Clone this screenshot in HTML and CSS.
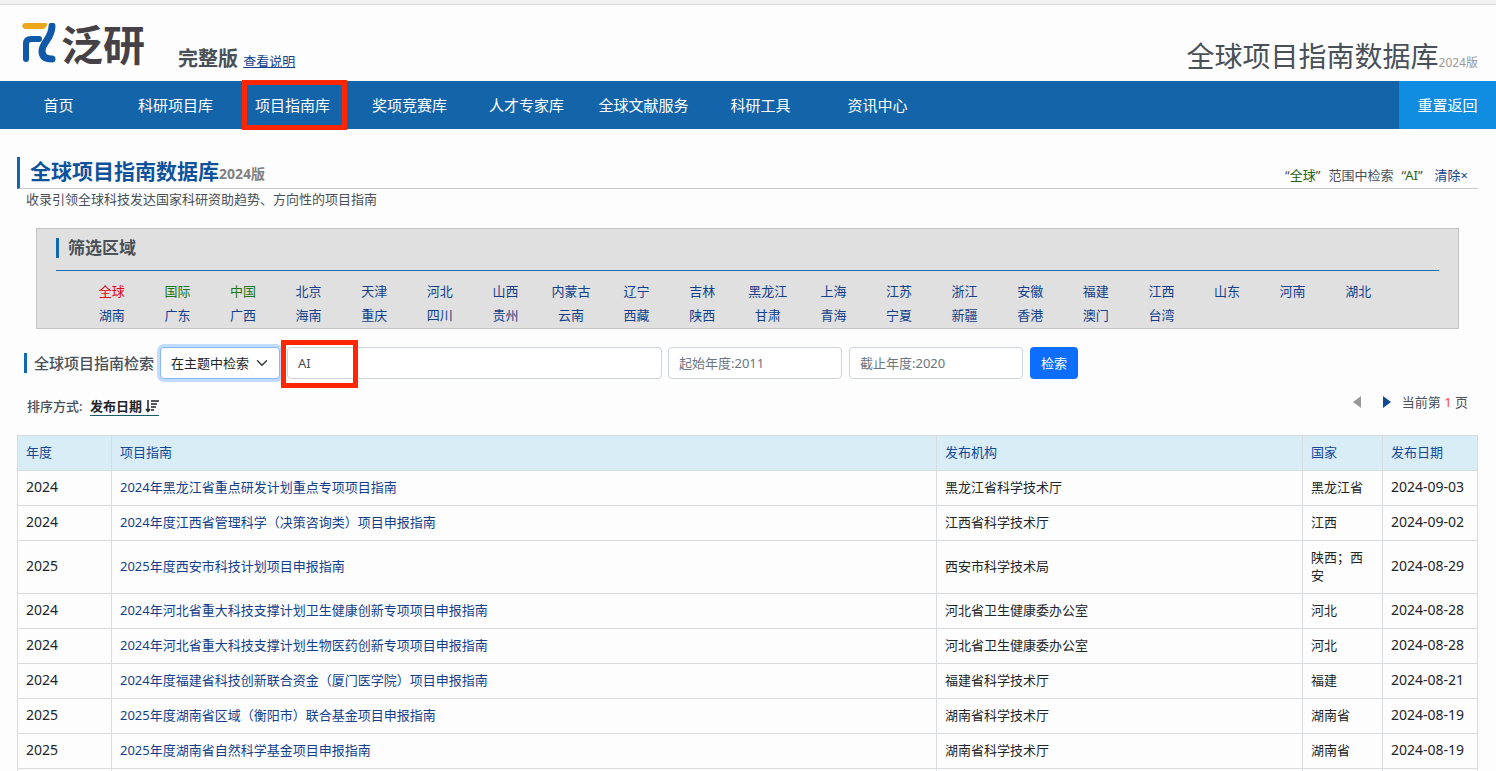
FILE: index.html
```html
<!DOCTYPE html>
<html lang="zh-CN">
<head>
  <meta charset="UTF-8">
  <meta name="viewport" content="width=device-width, initial-scale=1.0">
  <title>全球项目指南数据库</title>
  <link rel="stylesheet" href="styles.css">
</head>
<body>
  <header class="top">
    <a class="logo" href="#">
      <svg class="logo-mark" viewBox="0 0 36 40" width="36" height="40" aria-hidden="true">
        <path d="M4 0h20q3 0 2 2l-1 2q-1 2-3 2H4q-2 0-3-3 1-3 3-3z" fill="#eda51c"/>
        <path d="M5 36V21q0-5 5-5h8" fill="none" stroke="#1059a8" stroke-width="6" stroke-linecap="round"/>
        <path d="M31 3c0 13-10 16-10 25 0 5 3 8 10 8" fill="none" stroke="#1059a8" stroke-width="7" stroke-linecap="round"/>
      </svg>
      <span class="logo-text">泛研</span>
    </a>
    <div class="edition">完整版 <a href="#">查看说明</a></div>
    <div class="site-name">全球项目指南数据库<small>2024版</small></div>
  </header>

  <nav class="nav">
    <a href="#">首页</a>
    <a href="#">科研项目库</a>
    <a href="#" class="marked">项目指南库</a>
    <a href="#">奖项竞赛库</a>
    <a href="#">人才专家库</a>
    <a href="#">全球文献服务</a>
    <a href="#">科研工具</a>
    <a href="#">资讯中心</a>
    <a href="#" class="reset">重置返回</a>
  </nav>

  <main class="main">
    <div class="title-row">
      <h1>全球项目指南数据库<small>2024版</small></h1>
      <div class="scope">
        <span>“<b>全球</b>”</span>
        <span>范围中检索</span>
        <span>“<b>AI</b>”</span>
        <a href="#">清除×</a>
      </div>
    </div>
    <p class="intro">收录引领全球科技发达国家科研资助趋势、方向性的项目指南</p>

    <section class="filter">
      <h2>筛选区域</h2>
      <div class="regions">
        <a href="#" class="current">全球</a>
        <a href="#" class="wide">国际</a>
        <a href="#" class="wide">中国</a>
        <a href="#">北京</a>
        <a href="#">天津</a>
        <a href="#">河北</a>
        <a href="#">山西</a>
        <a href="#">内蒙古</a>
        <a href="#">辽宁</a>
        <a href="#">吉林</a>
        <a href="#">黑龙江</a>
        <a href="#">上海</a>
        <a href="#">江苏</a>
        <a href="#">浙江</a>
        <a href="#">安徽</a>
        <a href="#">福建</a>
        <a href="#">江西</a>
        <a href="#">山东</a>
        <a href="#">河南</a>
        <a href="#">湖北</a>
        <a href="#">湖南</a>
        <a href="#">广东</a>
        <a href="#">广西</a>
        <a href="#">海南</a>
        <a href="#">重庆</a>
        <a href="#">四川</a>
        <a href="#">贵州</a>
        <a href="#">云南</a>
        <a href="#">西藏</a>
        <a href="#">陕西</a>
        <a href="#">甘肃</a>
        <a href="#">青海</a>
        <a href="#">宁夏</a>
        <a href="#">新疆</a>
        <a href="#">香港</a>
        <a href="#">澳门</a>
        <a href="#">台湾</a>
      </div>
    </section>

    <form class="search">
      <label class="search-label" for="field">全球项目指南检索</label>
      <div class="select-box">
        <select id="field">
          <option>在主题中检索</option>
        </select>
        <svg viewBox="0 0 16 16" width="12" height="12" aria-hidden="true">
          <path d="M2 5l6 6 6-6" fill="none" stroke="#343a40" stroke-width="2" stroke-linecap="round" stroke-linejoin="round"/>
        </svg>
      </div>
      <div class="keyword">
        <input type="text" value="AI" aria-label="检索词">
      </div>
      <input class="year" type="text" placeholder="起始年度:2011" aria-label="起始年度">
      <input class="year" type="text" placeholder="截止年度:2020" aria-label="截止年度">
      <button type="submit">检索</button>
    </form>

    <div class="list-bar">
      <div class="sort">排序方式:
        <a href="#">发布日期
          <svg viewBox="0 0 14 14" width="14" height="14" aria-hidden="true">
            <path d="M3 1v11M1 10l2 2.500 2-2.500M6 2h8M6 5h6M6 8h5M6 11h3" fill="none" stroke="#212529" stroke-width="1.500"/>
          </svg>
        </a>
      </div>
      <div class="pager">
        <a href="#" aria-label="上一页"><svg viewBox="0 0 8 12" width="8" height="12"><path d="M8 0v12L0 6z" fill="#999"/></svg></a>
        <a href="#" aria-label="下一页"><svg viewBox="0 0 8 12" width="8" height="12"><path d="M0 0v12l8-6z" fill="#124a92"/></svg></a>
        <span>当前第 <em>1</em> 页</span>
      </div>
    </div>

    <table class="guides">
      <thead>
        <tr>
          <th class="col-year">年度</th>
          <th>项目指南</th>
          <th class="col-org">发布机构</th>
          <th class="col-area">国家</th>
          <th class="col-date">发布日期</th>
        </tr>
      </thead>
      <tbody>
        <tr>
          <td class="num">2024</td>
          <td><a href="#">2024年黑龙江省重点研发计划重点专项项目指南</a></td>
          <td>黑龙江省科学技术厅</td>
          <td>黑龙江省</td>
          <td class="num">2024-09-03</td>
        </tr>
        <tr>
          <td class="num">2024</td>
          <td><a href="#">2024年度江西省管理科学（决策咨询类）项目申报指南</a></td>
          <td>江西省科学技术厅</td>
          <td>江西</td>
          <td class="num">2024-09-02</td>
        </tr>
        <tr>
          <td class="num">2025</td>
          <td><a href="#">2025年度西安市科技计划项目申报指南</a></td>
          <td>西安市科学技术局</td>
          <td>陕西；西安</td>
          <td class="num">2024-08-29</td>
        </tr>
        <tr>
          <td class="num">2024</td>
          <td><a href="#">2024年河北省重大科技支撑计划卫生健康创新专项项目申报指南</a></td>
          <td>河北省卫生健康委办公室</td>
          <td>河北</td>
          <td class="num">2024-08-28</td>
        </tr>
        <tr>
          <td class="num">2024</td>
          <td><a href="#">2024年河北省重大科技支撑计划生物医药创新专项项目申报指南</a></td>
          <td>河北省卫生健康委办公室</td>
          <td>河北</td>
          <td class="num">2024-08-28</td>
        </tr>
        <tr>
          <td class="num">2024</td>
          <td><a href="#">2024年度福建省科技创新联合资金（厦门医学院）项目申报指南</a></td>
          <td>福建省科学技术厅</td>
          <td>福建</td>
          <td class="num">2024-08-21</td>
        </tr>
        <tr>
          <td class="num">2025</td>
          <td><a href="#">2025年度湖南省区域（衡阳市）联合基金项目申报指南</a></td>
          <td>湖南省科学技术厅</td>
          <td>湖南省</td>
          <td class="num">2024-08-19</td>
        </tr>
        <tr>
          <td class="num">2025</td>
          <td><a href="#">2025年度湖南省自然科学基金项目申报指南</a></td>
          <td>湖南省科学技术厅</td>
          <td>湖南省</td>
          <td class="num">2024-08-19</td>
        </tr>
        <tr>
          <td></td>
          <td></td>
          <td></td>
          <td></td>
          <td></td>
        </tr>
      </tbody>
    </table>
  </main>
</body>
</html>
```
FILE: styles.css
```css
*,
*::before,
*::after {
  box-sizing: border-box;
}
body {
  margin: 0;
  height: 100vh;
  overflow: hidden;
  background: #fdfdfd;
  color: #495057;
  font: 13px/18px "Noto Sans", "Noto Sans CJK SC", sans-serif;
}
a {
  color: #123f8c;
  text-decoration: none;
}

/* header */
.top {
  display: flex;
  align-items: flex-end;
  height: 81px;
  padding: 0 18px 6px 21px;
  border-top: 4px solid #f3f3f3;
  box-shadow: inset 0 1px #d8d8d8;
}
.logo {
  display: flex;
  align-items: center;
  gap: 4px;
  height: 40px;
  margin-bottom: 12px;
}
.logo-text {
  color: #454147;
  font: 700 42px/40px "Noto Sans CJK SC", sans-serif;
}
.edition {
  margin-left: 33px;
  font-size: 20px;
  font-weight: bold;
  line-height: 28px;
}
.edition a {
  font-size: 13px;
  font-weight: normal;
  text-decoration: underline;
}
.site-name {
  margin-left: auto;
  font-size: 28px;
  line-height: 24px;
}
.site-name small {
  color: #999;
  font-size: 12px;
}

/* main menu */
.nav {
  display: flex;
  height: 48px;
  background: #1364a8;
  font-size: 15px;
  line-height: 48px;
  text-align: center;
}
.nav a {
  width: 117px;
  color: #fff;
}
.nav .reset {
  width: 97px;
  margin-left: auto;
  background: #108de0;
}
.marked,
.keyword {
  position: relative;
}
.marked::after,
.keyword::after {
  content: "";
  position: absolute;
  border: 5px solid #ff2600;
  pointer-events: none;
}
.marked::after {
  inset: -1px 4px -1px 8px;
}

.main {
  padding: 28px 18px 0 17px;
}
.title-row {
  display: flex;
  align-items: flex-end;
  justify-content: space-between;
  height: 32px;
  padding-right: 10px;
  border-bottom: 1px solid #c8c8c8;
  border-left: 3px solid #1364a8;
}
h1 {
  margin: 0 0 0 10px;
  color: #0f529c;
  font-size: 21px;
  line-height: 28px;
}
h1 small {
  color: #808080;
  font-size: 14px;
}
.scope {
  display: flex;
  gap: 8px;
  margin-bottom: 4px;
}
.scope b {
  color: #1b6113;
  font-weight: normal;
}
.scope a {
  margin-left: 4px;
}
.intro {
  margin: 1px 9px 20px;
}

/* region filter */
.filter {
  height: 101px;
  margin: 0 19px;
  padding: 9px 19px 0;
  background: #e0e0e0;
  border: 1px solid #c4c4c4;
}
.filter h2 {
  display: flex;
  align-items: center;
  margin: 0;
  padding-bottom: 12px;
  border-bottom: 1px solid #1a6eb2;
  font-size: 17px;
  line-height: 20px;
}
.filter h2::before,
.search-label::before {
  content: "";
  width: 3px;
  height: 20px;
  margin-right: 9px;
  background: #0f6ab4;
}
.regions {
  display: grid;
  grid-template-columns: repeat(20, 1fr);
  padding: 8px 48px 0 23px;
  line-height: 24px;
  text-align: center;
}
.regions .current {
  color: #e60012;
}
.regions .wide {
  color: #1b7613;
}

/* search form */
.search {
  display: flex;
  height: 32px;
  margin: 18px 0 0 7px;
}
.search-label {
  display: flex;
  align-items: center;
  margin-right: 6px;
  font-size: 15px;
  font-weight: 500;
}
.search-label::before {
  margin-right: 7px;
}
.search input,
.search select {
  height: 32px;
  padding: 0 10px;
  background: #fff;
  border: 1px solid #ced4da;
  border-radius: 4px;
  color: #495057;
  font: inherit;
}
.search input::placeholder {
  color: #6c757d;
}
.select-box {
  position: relative;
  width: 120px;
}
.search select {
  width: 100%;
  appearance: none;
  border-color: #86b7fe;
  box-shadow: 0 0 0 3px #c2dbfe;
  color: #212529;
}
.select-box svg {
  position: absolute;
  top: 10px;
  right: 12px;
}
.keyword {
  width: 375px;
  margin: 0 6px 0 7px;
}
.keyword input {
  width: 100%;
}
.keyword::after {
  top: -7px;
  left: -6px;
  width: 77px;
  height: 48px;
}
.search .year {
  width: 174px;
  margin-right: 7px;
}
.search button {
  width: 48px;
  padding: 0;
  background: #0d6efd;
  border: 0;
  border-radius: 4px;
  color: #fff;
  font: inherit;
}

/* sorting and paging */
.list-bar {
  display: flex;
  justify-content: space-between;
  height: 56px;
  padding: 14px 10px 0;
}
.sort {
  padding-top: 4px;
  font-weight: 500;
}
.sort a {
  display: inline-block;
  margin-left: 4px;
  border-bottom: 1px solid #1d5c6b;
  color: #212529;
  font-weight: 600;
  line-height: 17px;
}
.sort svg {
  vertical-align: -2px;
}
.pager {
  display: flex;
  align-items: flex-start;
}
.pager a {
  display: flex;
  margin: 3px 11px;
}
.pager em {
  color: #f04a1d;
  font-style: normal;
}

/* results */
.guides {
  width: 100%;
  border-collapse: collapse;
  table-layout: fixed;
  color: #212529;
}
.guides th,
.guides td {
  height: 35px;
  padding: 7px 8px 9px;
  border: 1px solid #d9dcdf;
  text-align: left;
}
.guides th {
  background: #d9edf7;
  color: #164799;
  font-weight: normal;
}
.guides .num {
  font-size: 14px;
}
.col-year {
  width: 94px;
}
.col-org {
  width: 366px;
}
.col-area {
  width: 80px;
}
.col-date {
  width: 95px;
}
```
